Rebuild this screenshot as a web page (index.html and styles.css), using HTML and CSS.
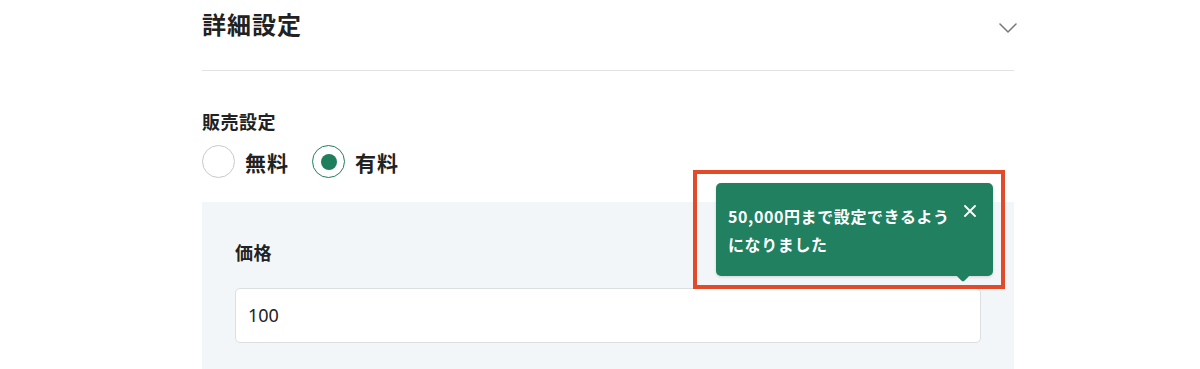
FILE: index.html
```html
<!DOCTYPE html>
<html lang="ja">
<head>
<meta charset="utf-8">
<link rel="stylesheet" href="styles.css">
</head>
<body>
<div class="page">
  <div class="settings">
    <header class="settings-header">
      <h2 class="settings-title">詳細設定</h2>
      <svg class="chevron" width="18" height="10" viewBox="0 0 18 10"><path d="M1 1l8 8 8-8" fill="none" stroke="#7a7a7a" stroke-width="1.6" stroke-linecap="round" stroke-linejoin="round"/></svg>
    </header>

    <div class="field-label">販売設定</div>
    <div class="radio-row">
      <label class="radio"><span class="radio-circle"></span><span class="radio-text">無料</span></label>
      <label class="radio"><span class="radio-circle checked"><span class="radio-dot"></span></span><span class="radio-text">有料</span></label>
    </div>

    <div class="panel">
      <div class="panel-label">価格</div>
      <div class="input">100</div>
    </div>

    <div class="tooltip">
      <div class="tooltip-text">50,000円まで設定できるようになりました</div>
      <svg class="tooltip-close" width="12" height="12" viewBox="0 0 12 12"><path d="M1 1l10 10M11 1L1 11" stroke="#fff" stroke-width="1.8" stroke-linecap="round"/></svg>
      <span class="tooltip-arrow"></span>
    </div>
    <div class="highlight"></div>
  </div>
</div>
</body>
</html>
```

FILE: styles.css
```css
* { box-sizing: border-box; }
html, body { margin: 0; padding: 0; background: #fff; }
body {
  font-family: "Noto Sans CJK JP", "Noto Sans", sans-serif;
  color: #222;
  height: 369px;
  overflow: hidden;
}
.page { padding-left: 202px; }
.settings { position: relative; width: 812px; }

.settings-header {
  display: flex;
  align-items: flex-start;
  justify-content: space-between;
  height: 71px;
  border-bottom: 1px solid #e2e2e2;
}
.settings-title {
  margin: 0;
  font-size: 24px;
  line-height: 48px;
  font-weight: 700;
  letter-spacing: 1px;
}
.chevron { margin-top: 23px; margin-right: -3px; }

.field-label {
  margin-top: 38px;
  font-size: 18px;
  line-height: 24px;
  font-weight: 600;
  letter-spacing: 0.5px;
}
.radio-row {
  display: flex;
  align-items: center;
  gap: 23px;
  margin-top: 12px;
}
.radio { display: flex; align-items: center; gap: 10px; }
.radio-circle {
  width: 33px; height: 33px;
  border-radius: 50%;
  border: 1px solid #c9c9c9;
  display: flex; align-items: center; justify-content: center;
  background: #fff;
}
.radio-circle.checked { border: 1.5px solid #1f7f5c; }
.radio-dot { width: 16px; height: 16px; border-radius: 50%; background: #1f7f5c; }
.radio-text { font-size: 21px; font-weight: 700; line-height: 32px; letter-spacing: 1px; }

.panel {
  margin-top: 24px;
  background: #f3f6f9;
  padding: 37px 33px 40px;
}
.panel-label { font-size: 18px; font-weight: 700; line-height: 27px; letter-spacing: 0.5px; }
.input {
  margin-top: 22px;
  height: 55px;
  background: #fff;
  border: 1px solid #dcdfe2;
  border-radius: 5px;
  padding-left: 12px;
  font-family: "Noto Sans", sans-serif;
  font-size: 18px;
  line-height: 53px;
  color: #222;
}

.tooltip {
  position: absolute;
  left: 514px;
  top: 183px;
  width: 277px;
  height: 93px;
  background: #20805f;
  border-radius: 5px;
  padding: 19px 17px 18px 12px;
  display: flex;
  align-items: flex-start;
  gap: 4px;
  box-shadow: 0 1px 3px rgba(0,0,0,0.15);
}
.tooltip-text {
  flex: 1;
  color: #fff;
  font-size: 16px;
  font-weight: 700;
  line-height: 28px;
  letter-spacing: 0.6px;
}
.tooltip-close { margin-top: 3px; flex: none; }
.tooltip-arrow {
  position: absolute;
  left: 242px;
  bottom: -4px;
  width: 10px; height: 10px;
  background: #20805f;
  border-radius: 2px;
  transform: rotate(45deg);
}
.highlight {
  position: absolute;
  left: 491px;
  top: 170px;
  width: 312px;
  height: 119px;
  border: 4px solid #e24a2a;
}
```
